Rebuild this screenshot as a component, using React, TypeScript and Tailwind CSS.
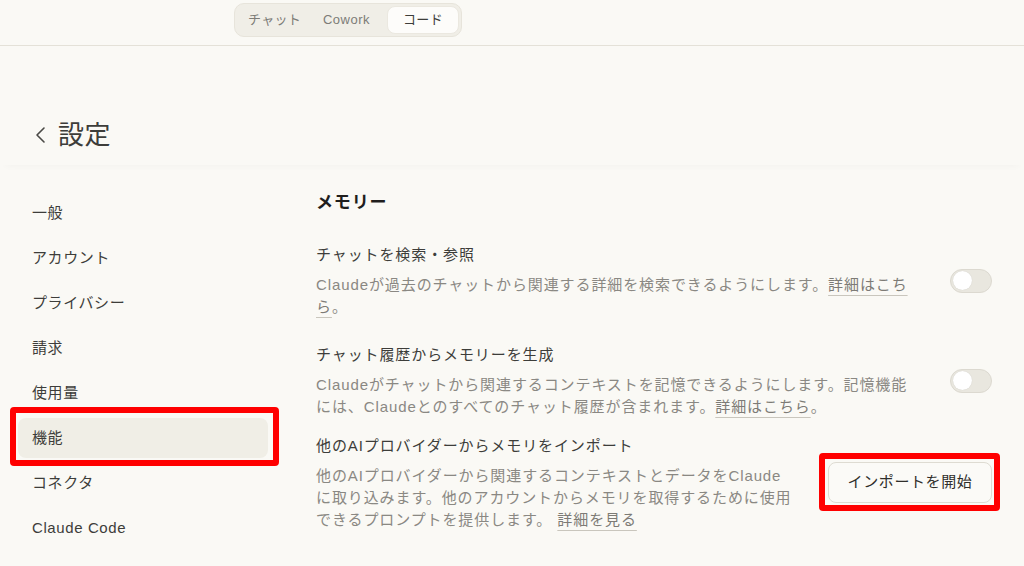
import React from "react";

const font = { fontFamily: '"Liberation Sans", "Noto Sans CJK JP", sans-serif' };

const navItems = ["一般", "アカウント", "プライバシー", "請求", "使用量", "機能", "コネクタ", "Claude Code"];

function Toggle() {
  return (
    <div className="w-[42px] h-[24px] rounded-full bg-[#e9e7df] border border-[#dcd9d0] flex items-center px-[2px] shrink-0">
      <div className="w-[19px] h-[19px] rounded-full bg-white shadow-[0_0_1px_rgba(0,0,0,0.15)]" />
    </div>
  );
}

function Link({ children }: { children: React.ReactNode }) {
  return (
    <span className="text-[#7d7b76] underline decoration-[#c9c6bd] decoration-1 underline-offset-[5px]">{children}</span>
  );
}

export default function App() {
  return (
    <div className="w-full h-[566px] bg-[#faf9f5] overflow-hidden text-[#3d3d3a]" style={font}>
      {/* top bar */}
      <div className="h-[46px] border-b border-[#e4e1d8] pt-[3px] pl-[234px]">
        <div className="w-[228px] h-[34px] rounded-[10px] bg-[#f0eee7] border border-[#e7e4db] flex items-center pl-[13px] pr-[2px] text-[13px] text-[#7d7c77] tracking-[0.02em]">
          <span>チャット</span>
          <span className="ml-[22px] tracking-[0.04em]">Cowork</span>
          <span className="ml-auto w-[72px] h-[28px] rounded-[8px] bg-[#fdfcfa] border border-[#ebe8e0] flex items-center justify-center text-[#3d3d3a]">コード</span>
        </div>
      </div>

      {/* page title */}
      <div className="h-[119px] pt-[71px] shadow-[0_6px_8px_-6px_rgba(0,0,0,0.04)]">
        <div className="flex items-center pl-[35px] h-[36px]">
          <svg width="11" height="18" viewBox="0 0 11 18" fill="none" stroke="#4a4946" strokeWidth="1.6" strokeLinecap="round" strokeLinejoin="round">
            <polyline points="9,2 2,9 9,16" />
          </svg>
          <span className="ml-[12px] text-[26px] text-[#3d3d3a] tracking-[0.02em]">設定</span>
        </div>
      </div>

      <div className="flex">
        {/* sidebar */}
        <nav className="w-[316px] pl-[18px] pt-[28px] shrink-0">
          {navItems.map((item) => {
            const active = item === "機能";
            return (
              <div key={item} className={`relative w-[250px] h-[40px] mb-[5px] rounded-[8px] pl-[14px] flex items-center text-[15px] tracking-[0.04em] ${active ? "bg-[#f0eee6]" : ""}`}>
                {item}
                {active && <div className="absolute -left-[8px] -right-[11px] -top-[11px] -bottom-[8px] border-[6px] border-[#ff0000] rounded-[4px]" />}
              </div>
            );
          })}
        </nav>

        {/* main */}
        <main className="flex-1 pr-[32px] pt-[26px]">
          <h2 className="text-[17px] leading-[24px] font-bold text-[#1f1e1d] tracking-[0.05em]">メモリー</h2>

          <div className="mt-[28px] flex items-center gap-[40px]">
            <div className="flex-1">
              <div className="text-[15px] leading-[24px] tracking-[0.06em]">チャットを検索・参照</div>
              <p className="mt-[7px] text-[15px] leading-[22px] tracking-[0.06em] text-[#8a8883]">
                Claudeが過去のチャットから関連する詳細を検索できるようにします。<Link>詳細はこちら</Link>。
              </p>
            </div>
            <Toggle />
          </div>

          <div className="mt-[25px] flex items-center gap-[40px]">
            <div className="flex-1">
              <div className="text-[15px] leading-[24px] tracking-[0.06em]">チャット履歴からメモリーを生成</div>
              <p className="mt-[7px] text-[15px] leading-[22px] tracking-[0.06em] text-[#8a8883]">
                Claudeがチャットから関連するコンテキストを記憶できるようにします。記憶機能には、Claudeとのすべてのチャット履歴が含まれます。<Link>詳細はこちら</Link>。
              </p>
            </div>
            <Toggle />
          </div>

          <div className="mt-[16px] flex items-center justify-between">
            <div className="w-[478px]">
              <div className="text-[15px] leading-[24px] tracking-[0.06em]">他のAIプロバイダーからメモリをインポート</div>
              <p className="mt-[7px] text-[15px] leading-[22px] tracking-[0.06em] text-[#8a8883]">
                他のAIプロバイダーから関連するコンテキストとデータをClaudeに取り込みます。他のアカウントからメモリを取得するために使用できるプロンプトを提供します。 <Link>詳細を見る</Link>
              </p>
            </div>
            <div className="relative shrink-0">
              <button className="w-[164px] h-[41px] rounded-[8px] bg-[#fbfaf7] border border-[#dedbd2] text-[15px] tracking-[0.04em] text-[#2f2e2b]">
                インポートを開始
              </button>
              <div className="absolute -left-[9px] -right-[8px] -top-[9px] -bottom-[8px] border-[6px] border-[#ff0000] rounded-[4px]" />
            </div>
          </div>
        </main>
      </div>
    </div>
  );
}
